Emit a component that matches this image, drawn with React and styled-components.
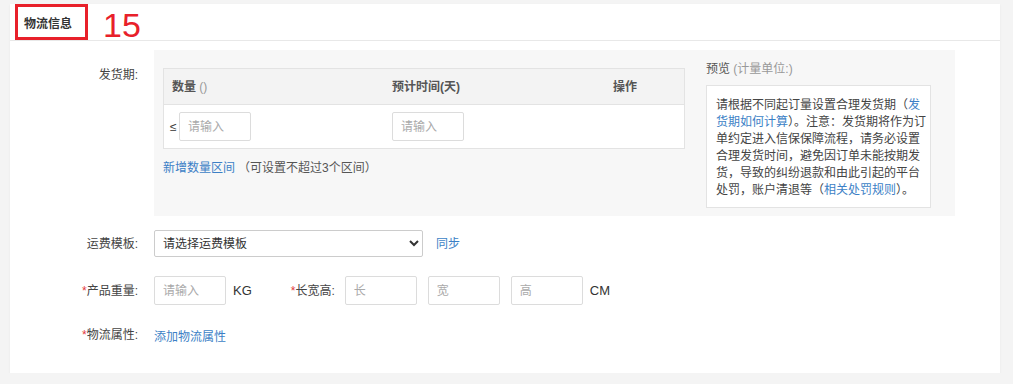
import React from 'react'
import styled, { createGlobalStyle } from 'styled-components'

const GlobalStyle = createGlobalStyle`
    body {
        margin: 0;
        padding: 4px 13px 0 10px;
        background: #f4f4f4;
        font-family: "Liberation Sans", "Noto Sans CJK SC", sans-serif;
        font-size: 12px;
        color: #333;
    }
`

function App() {
    return (
        <>
            <GlobalStyle />
            <Card>
                <Header>
                    <TitleBox>物流信息</TitleBox>
                    <Badge>15</Badge>
                </Header>

                <Form>
                    <Row top>
                        <Label top>发货期:</Label>
                        <Panel>
                            <TableCol>
                                <Table>
                                    <HeadRow>
                                        <HeadCell>数量 <Muted>()</Muted></HeadCell>
                                        <HeadCell>预计时间(天)</HeadCell>
                                        <HeadCell>操作</HeadCell>
                                    </HeadRow>
                                    <BodyRow>
                                        <Cell first>
                                            <Le>≤</Le>
                                            <Input width={72} placeholder="请输入" />
                                        </Cell>
                                        <Cell>
                                            <Input width={72} placeholder="请输入" />
                                        </Cell>
                                        <Cell />
                                    </BodyRow>
                                </Table>
                                <AddLine>
                                    <Link href="#">新增数量区间</Link>
                                    <Hint>（可设置不超过3个区间）</Hint>
                                </AddLine>
                            </TableCol>

                            <Preview>
                                <PreviewTitle>预览 <Muted>(计量单位:)</Muted></PreviewTitle>
                                <PreviewBox>
                                    请根据不同起订量设置合理发货期（<Link href="#">发货期如何计算</Link>）。注意：发货期将作为订单约定进入信保保障流程，请务必设置合理发货时间，避免因订单未能按期发货，导致的纠纷退款和由此引起的平台处罚，账户清退等（<Link href="#">相关处罚规则</Link>）。
                                </PreviewBox>
                            </Preview>
                        </Panel>
                    </Row>

                    <Row gap={14}>
                        <Label>运费模板:</Label>
                        <Select defaultValue="">
                            <option value="">请选择运费模板</option>
                        </Select>
                        <SideLink href="#">同步</SideLink>
                    </Row>

                    <Row gap={19}>
                        <Label><Star>*</Star>产品重量:</Label>
                        <Input width={72} placeholder="请输入" />
                        <Unit>KG</Unit>
                        <InlineLabel><Star>*</Star>长宽高:</InlineLabel>
                        <Sizes>
                            <Input width={72} placeholder="长" />
                            <Input width={72} placeholder="宽" />
                            <Input width={72} placeholder="高" />
                        </Sizes>
                        <Unit>CM</Unit>
                    </Row>

                    <Row gap={20}>
                        <Label><Star>*</Star>物流属性:</Label>
                        <Link href="#">添加物流属性</Link>
                    </Row>
                </Form>
            </Card>
        </>
    )
}

export default App

const Card = styled.div`
    width: 990px;
    height: 369px;
    box-sizing: border-box;
    background: #fff;
    box-shadow: 0 1px 2px rgba(0, 0, 0, 0.06);
`

const Header = styled.div`
    display: flex;
    align-items: center;
    height: 36px;
    padding-left: 5px;
    border-bottom: 1px solid #e8e8e8;
`

const TitleBox = styled.div`
    box-sizing: border-box;
    width: 73px;
    height: 36px;
    border: 3px solid #e8202a;
    padding-left: 6px;
    display: flex;
    align-items: center;
    font-weight: bold;
    font-size: 12px;
    color: #333;
`

const Badge = styled.div`
    margin-left: 15px;
    font-size: 34px;
    line-height: 36px;
    padding-top: 6px;
    color: #e8202a;
    font-family: "Liberation Sans", sans-serif;
`

const Form = styled.div`
    padding-top: 9px;
`

const Row = styled.div`
    display: flex;
    align-items: ${props => props.top ? 'flex-start' : 'center'};
    margin-top: ${props => props.gap || 0}px;
`

const Label = styled.div`
    width: 144px;
    box-sizing: border-box;
    padding-right: 16px;
    padding-top: ${props => props.top ? '15px' : '0'};
    text-align: right;
    line-height: 20px;
    color: #444;
    font-size: 12px;
    flex-shrink: 0;
`

const InlineLabel = styled.div`
    margin-left: 39px;
    margin-right: 10px;
    color: #444;
    line-height: 20px;
`

const Star = styled.span`
    color: #e4393c;
`

const Panel = styled.div`
    display: flex;
    width: 801px;
    height: 166px;
    box-sizing: border-box;
    padding: 10px 24px 0 9px;
    background: #f7f7f7;
    gap: 21px;
`

const TableCol = styled.div`
    display: flex;
    flex-direction: column;
    padding-top: 8px;
`

const Table = styled.div`
    width: 522px;
    box-sizing: border-box;
    border: 1px solid #e3e3e3;
    background: #fff;
`

const HeadRow = styled.div`
    display: grid;
    grid-template-columns: 220px 221px 1fr;
    height: 35px;
    align-items: center;
    background: #f3f3f3;
    border-bottom: 1px solid #e3e3e3;
    font-weight: bold;
    color: #555;
`

const HeadCell = styled.div`
    padding-left: 8px;
    line-height: 20px;
`

const BodyRow = styled.div`
    display: grid;
    grid-template-columns: 220px 221px 1fr;
    height: 43px;
    align-items: center;
`

const Cell = styled.div`
    display: flex;
    align-items: center;
    padding-left: ${props => props.first ? '6px' : '8px'};
`

const Muted = styled.span`
    color: #999;
    font-weight: normal;
`

const Le = styled.span`
    width: 9px;
    color: #333;
`

const Input = styled.input`
    box-sizing: border-box;
    width: ${props => props.width}px;
    height: 29px;
    border: 1px solid #dcdcdc;
    border-radius: 2px;
    padding: 0 8px;
    font-family: "Liberation Sans", "Noto Sans CJK SC", sans-serif;
    font-size: 12px;
    color: #333;
    outline: none;
    background: #fff;

    &::placeholder {
        color: #aaa;
    }
`

const AddLine = styled.div`
    margin-top: 11px;
    line-height: 17px;
`

const Link = styled.a`
    color: #3c7fc6;
    text-decoration: none;
`

const SideLink = styled(Link)`
    margin-left: 13px;
    line-height: 20px;
`

const Hint = styled.span`
    margin-left: 3px;
    color: #555;
`

const Preview = styled.div`
    display: flex;
    flex-direction: column;
`

const PreviewTitle = styled.div`
    line-height: 18px;
    color: #555;
`

const PreviewBox = styled.div`
    margin-top: 7px;
    width: 225px;
    box-sizing: border-box;
    padding: 11px 3px 8px 9px;
    border: 1px solid #e3e3e3;
    background: #fff;
    line-height: 17px;
    color: #444;
`

const Select = styled.select`
    box-sizing: border-box;
    width: 269px;
    height: 27px;
    border: 1px solid #ccc;
    border-radius: 2px;
    padding: 0 4px;
    font-family: "Liberation Sans", "Noto Sans CJK SC", sans-serif;
    font-size: 12px;
    color: #333;
    background: #fff;
`

const Sizes = styled.div`
    display: flex;
    gap: 11px;
`

const Unit = styled.span`
    margin-left: 7px;
    font-size: 13px;
    color: #333;
    line-height: 20px;
`
